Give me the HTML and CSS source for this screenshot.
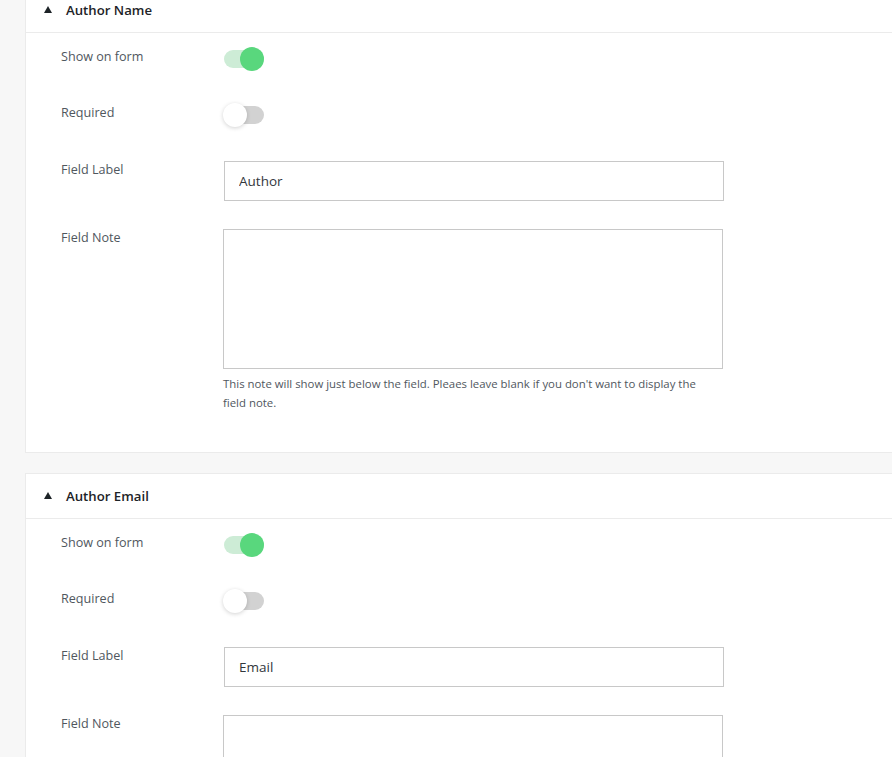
FILE: index.html
```html
<!DOCTYPE html>
<html lang="en">
<head>
<meta charset="utf-8">
<title>Fields</title>
<link rel="stylesheet" href="styles.css">
</head>
<body>
<div class="page">
  <section class="card card-first">
    <header class="card-head">
      <svg class="caret" width="8" height="7" viewBox="0 0 8 7"><path d="M4 0 L8 7 L0 7 Z" fill="#1d2327"/></svg>
      <span class="card-title">Author Name</span>
    </header>
    <div class="card-body">
      <div class="row row-toggle">
        <span class="label">Show on form</span>
        <span class="toggle on"><span class="knob"></span></span>
      </div>
      <div class="row row-toggle row-next">
        <span class="label">Required</span>
        <span class="toggle off"><span class="knob"></span></span>
      </div>
      <div class="row row-input">
        <span class="label">Field Label</span>
        <div class="control"><input class="text-input" type="text" value="Author"></div>
      </div>
      <div class="row row-area">
        <span class="label">Field Note</span>
        <div class="control">
          <textarea class="note-area"></textarea>
          <p class="hint">This note will show just below the field. Pleaes leave blank if you don't want to display the field note.</p>
        </div>
      </div>
    </div>
  </section>

  <section class="card">
    <header class="card-head">
      <svg class="caret" width="8" height="7" viewBox="0 0 8 7"><path d="M4 0 L8 7 L0 7 Z" fill="#1d2327"/></svg>
      <span class="card-title">Author Email</span>
    </header>
    <div class="card-body">
      <div class="row row-toggle">
        <span class="label">Show on form</span>
        <span class="toggle on"><span class="knob"></span></span>
      </div>
      <div class="row row-toggle row-next">
        <span class="label">Required</span>
        <span class="toggle off"><span class="knob"></span></span>
      </div>
      <div class="row row-input">
        <span class="label">Field Label</span>
        <div class="control"><input class="text-input" type="text" value="Email"></div>
      </div>
      <div class="row row-area">
        <span class="label">Field Note</span>
        <div class="control">
          <textarea class="note-area"></textarea>
          <p class="hint">This note will show just below the field. Pleaes leave blank if you don't want to display the field note.</p>
        </div>
      </div>
    </div>
  </section>
</div>
</body>
</html>
```

FILE: styles.css
```css
html, body {
  margin: 0;
  padding: 0;
  background: #f7f7f7;
  font-family: "Open Sans", "Noto Sans", Arial, sans-serif;
  color: #50575e;
}

.page {
  padding-left: 25px;
  overflow: hidden;
  height: 757px;
}

.card {
  background: #fff;
  border: 1px solid #ebebeb;
  margin-right: -10px;
  margin-bottom: 20px;
}

.card-first {
  margin-top: -13px;
}

.card-head {
  height: 44px;
  border-bottom: 1px solid #ebebeb;
  display: flex;
  align-items: center;
  padding-left: 18px;
  gap: 14px;
}

.caret {
  display: block;
  margin-top: -1px;
}

.card-title {
  font-size: 13.2px;
  font-weight: 600;
  color: #1d2327;
}

.card-body {
  padding: 14px 0 40px 35px;
}

.row {
  display: grid;
  grid-template-columns: 162px 500px;
  align-items: start;
}

.label {
  font-size: 12.6px;
  line-height: 20px;
  color: #50575e;
}

.row-next {
  margin-top: 32px;
}

.row-input {
  margin-top: 33px;
}

.row-area {
  margin-top: 27px;
}

.toggle {
  position: relative;
  display: block;
  width: 41px;
  height: 24px;
}

.toggle::before {
  content: "";
  position: absolute;
  left: 1px;
  right: 0;
  top: 3px;
  height: 18px;
  border-radius: 9px;
  background: #d2d2d2;
}

.toggle.on::before {
  background: #cdecd6;
}

.toggle .knob {
  position: absolute;
  top: 0;
  width: 24px;
  height: 24px;
  border-radius: 50%;
}

.toggle.on .knob {
  right: 0;
  background: #59d77d;
}

.toggle.off .knob {
  left: 0;
  background: #fff;
  box-shadow: 0 1px 4px rgba(0, 0, 0, 0.18);
}

.control {
  display: flex;
  flex-direction: column;
}

.text-input {
  box-sizing: border-box;
  width: 500px;
  height: 40px;
  margin: 1px 0 0 1px;
  border: 1px solid #c8c8c8;
  border-radius: 0;
  padding: 0 14px;
  font-family: inherit;
  font-size: 13.5px;
  color: #32373c;
  background: #fff;
  outline: none;
}

.note-area {
  box-sizing: border-box;
  display: block;
  width: 500px;
  height: 140px;
  margin: 1px 0 0 0;
  border: 1px solid #c8c8c8;
  border-radius: 0;
  resize: none;
  background: #fff;
  outline: none;
}

.hint {
  margin: 5px 0 0;
  width: 488px;
  font-size: 11.4px;
  line-height: 19px;
  color: #50575e;
}
```
